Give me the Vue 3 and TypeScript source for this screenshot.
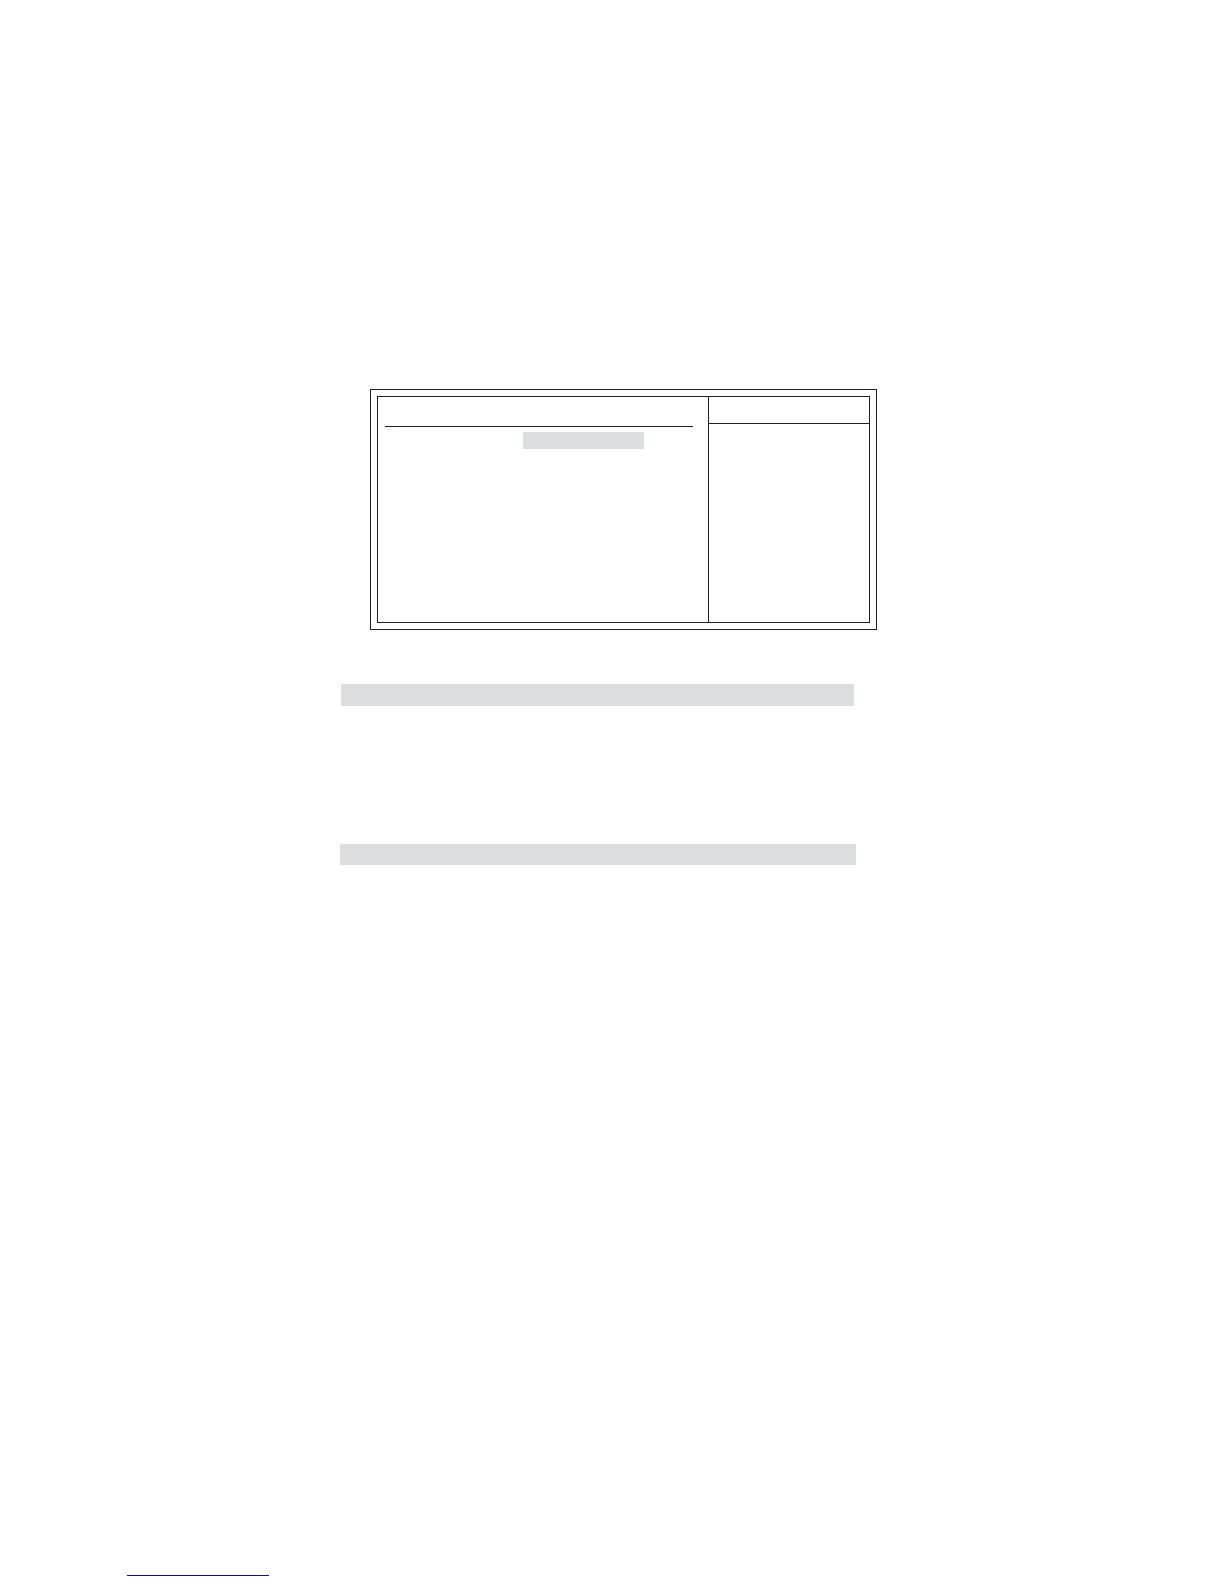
<script setup lang="ts">
const bands: string[] = ['band-first', 'band-second']
</script>

<template>
  <main class="page">
    <div class="content">
      <section class="frame">
        <div class="screen">
          <div class="settings">
            <header class="settings-head"></header>
            <div class="selected"></div>
          </div>
          <aside class="help">
            <header class="help-head"></header>
          </aside>
        </div>
      </section>
      <div v-for="band in bands" :key="band" class="band" :class="band"></div>
    </div>
    <footer class="footer">
      <hr class="footer-rule" />
    </footer>
  </main>
</template>

<style>
body {
  margin: 0;
  background: #ffffff;
}
</style>

<style scoped>
.page {
  box-sizing: border-box;
  display: flex;
  flex-direction: column;
  justify-content: space-between;
  min-height: 100vh;
  padding: 389px 127px 8px;
  font-family: "Liberation Sans", Arial, sans-serif;
}

.content {
  max-width: 537px;
  margin-left: 213px;
}

.frame {
  margin-left: 30px;
  padding: 6px;
  border: 1px solid #231f20;
}

.screen {
  display: grid;
  grid-template-columns: 330fr 161fr;
  min-height: 225px;
  border: 1px solid #231f20;
}

.settings {
  padding: 0 15px 0 7px;
}

.settings-head {
  height: 29px;
  border-bottom: 1px solid #231f20;
}

.selected {
  width: 121px;
  height: 17px;
  margin: 5px 0 0 138px;
  background: #dcddde;
}

.help {
  border-left: 1px solid #231f20;
}

.help-head {
  height: 26px;
  border-bottom: 1px solid #231f20;
}

.band {
  background: #dcddde;
}

.band-first {
  height: 22px;
  margin: 54px 23px 0 1px;
}

.band-second {
  height: 21px;
  margin: 138px 21px 0 0;
}

.footer-rule {
  width: 142px;
  height: 1px;
  margin: 0;
  border: 0;
  background: #10109a;
}
</style>
